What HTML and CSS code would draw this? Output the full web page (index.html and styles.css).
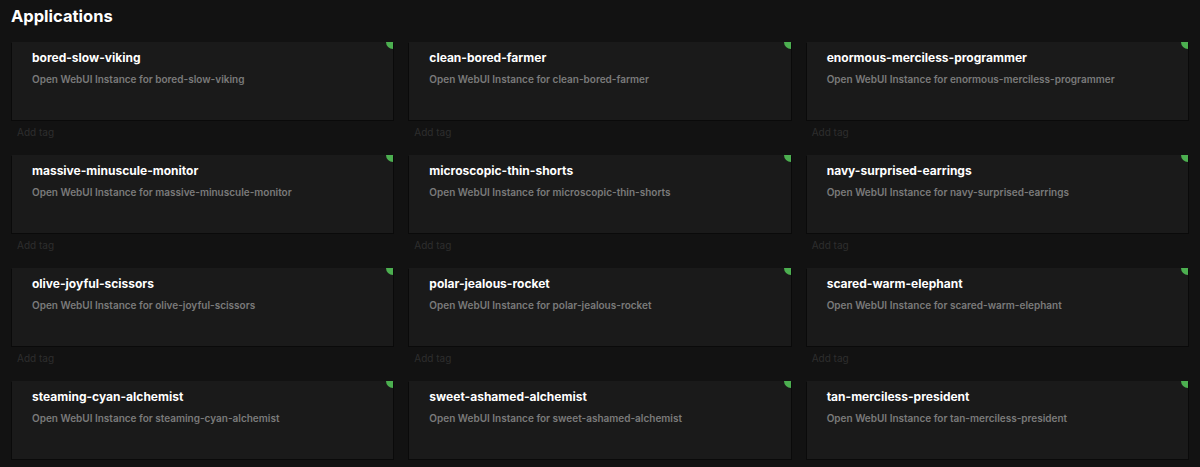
FILE: index.html
```html
<!DOCTYPE html>
<html>
<head>
<meta charset="utf-8">
<link rel="stylesheet" href="styles.css">
</head>
<body>
<div class="page">
  <h1 class="heading">Applications</h1>
  <div class="grid">
    <div class="item"><div class="card"><span class="status"></span><div class="name">bored-slow-viking</div><div class="desc">Open WebUI Instance for bored-slow-viking</div></div><div class="tag">Add tag</div></div>
    <div class="item"><div class="card"><span class="status"></span><div class="name">clean-bored-farmer</div><div class="desc">Open WebUI Instance for clean-bored-farmer</div></div><div class="tag">Add tag</div></div>
    <div class="item"><div class="card"><span class="status"></span><div class="name">enormous-merciless-programmer</div><div class="desc">Open WebUI Instance for enormous-merciless-programmer</div></div><div class="tag">Add tag</div></div>
    <div class="item"><div class="card"><span class="status"></span><div class="name">massive-minuscule-monitor</div><div class="desc">Open WebUI Instance for massive-minuscule-monitor</div></div><div class="tag">Add tag</div></div>
    <div class="item"><div class="card"><span class="status"></span><div class="name">microscopic-thin-shorts</div><div class="desc">Open WebUI Instance for microscopic-thin-shorts</div></div><div class="tag">Add tag</div></div>
    <div class="item"><div class="card"><span class="status"></span><div class="name">navy-surprised-earrings</div><div class="desc">Open WebUI Instance for navy-surprised-earrings</div></div><div class="tag">Add tag</div></div>
    <div class="item"><div class="card"><span class="status"></span><div class="name">olive-joyful-scissors</div><div class="desc">Open WebUI Instance for olive-joyful-scissors</div></div><div class="tag">Add tag</div></div>
    <div class="item"><div class="card"><span class="status"></span><div class="name">polar-jealous-rocket</div><div class="desc">Open WebUI Instance for polar-jealous-rocket</div></div><div class="tag">Add tag</div></div>
    <div class="item"><div class="card"><span class="status"></span><div class="name">scared-warm-elephant</div><div class="desc">Open WebUI Instance for scared-warm-elephant</div></div><div class="tag">Add tag</div></div>
    <div class="item"><div class="card"><span class="status"></span><div class="name">steaming-cyan-alchemist</div><div class="desc">Open WebUI Instance for steaming-cyan-alchemist</div></div><div class="tag">Add tag</div></div>
    <div class="item"><div class="card"><span class="status"></span><div class="name">sweet-ashamed-alchemist</div><div class="desc">Open WebUI Instance for sweet-ashamed-alchemist</div></div><div class="tag">Add tag</div></div>
    <div class="item"><div class="card"><span class="status"></span><div class="name">tan-merciless-president</div><div class="desc">Open WebUI Instance for tan-merciless-president</div></div><div class="tag">Add tag</div></div>
  </div>
</div>
</body>
</html>
```
FILE: styles.css
```css
html, body {
  margin: 0;
  padding: 0;
  background: #121212;
  font-family: Inter, "Noto Sans", sans-serif;
  overflow: hidden;
}
.page {
  padding: 4px 11px 0 11px;
}
.heading {
  margin: 0 0 14px 0;
  font-size: 16.5px;
  line-height: 24px;
  font-weight: 700;
  color: #ffffff;
}
.grid {
  display: grid;
  grid-template-columns: repeat(3, 1fr);
  column-gap: 14px;
  row-gap: 14px;
}
.card {
  position: relative;
  height: 79px;
  box-sizing: border-box;
  background: #1a1a1a;
  border: 1px solid #0a0a0a;
  border-top-color: #1a1a1a;
  padding: 7px 20px 0 20px;
}
.status {
  position: absolute;
  top: -1px;
  right: 0;
  width: 7px;
  height: 7px;
  background: #4caf50;
  border-bottom-left-radius: 7px;
}
.name {
  font-size: 12px;
  line-height: 16px;
  font-weight: 650;
  color: #ffffff;
}
.desc {
  margin-top: 6px;
  font-size: 10px;
  line-height: 14px;
  font-weight: 600;
  color: #7a7a7a;
}
.tag {
  height: 20px;
  box-sizing: border-box;
  padding: 3px 0 0 6px;
  font-size: 10px;
  line-height: 16px;
  color: #2e2e2e;
}
```
